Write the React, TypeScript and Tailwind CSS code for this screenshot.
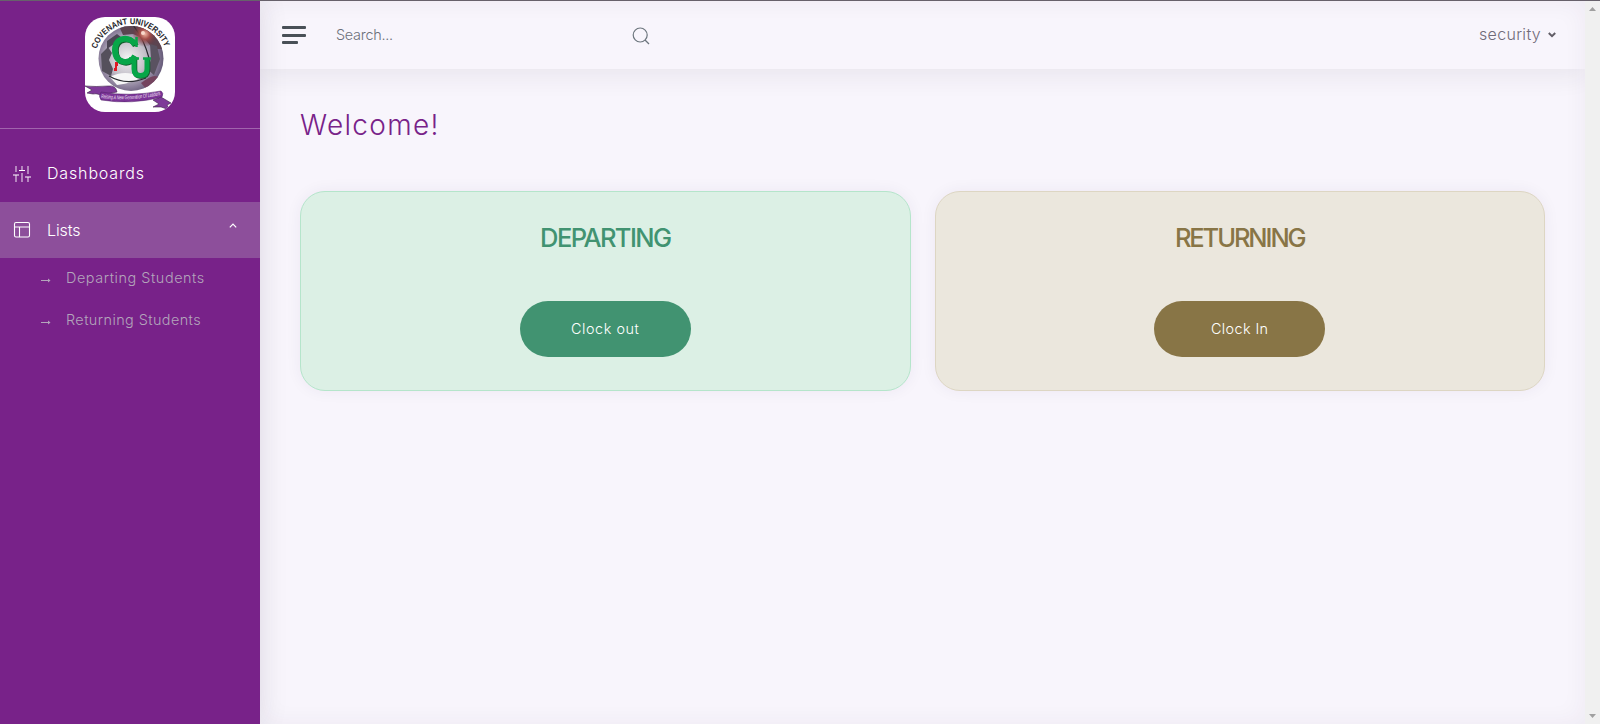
import React from "react";

function Logo() {
  return (
    <svg viewBox="0 0 90 95" className="h-[95px] w-[90px] rounded-[20px] bg-white">
      <defs>
        <radialGradient id="globe" cx="0.45" cy="0.5" r="0.55">
          <stop offset="0" stopColor="#f4f4f4" />
          <stop offset="0.5" stopColor="#c4c0c9" />
          <stop offset="0.8" stopColor="#8d819c" />
          <stop offset="1" stopColor="#655a78" />
        </radialGradient>
        <radialGradient id="flare" cx="0.5" cy="0.5" r="0.5">
          <stop offset="0" stopColor="#f0b3a0" />
          <stop offset="0.4" stopColor="#a34d48" />
          <stop offset="1" stopColor="#6b3440" stopOpacity="0" />
        </radialGradient>
        <clipPath id="disc"><circle cx="46" cy="41.500" r="32.500" /></clipPath>
        <path id="arc" d="M11.500 32 A36.300 36.300 0 0 1 82.300 44" />
        <path id="motto" d="M16 81 Q46 85 80 77" />
      </defs>
      <circle cx="46" cy="41.500" r="32.500" fill="url(#globe)" />
      <g clipPath="url(#disc)">
        <path d="M34 9 Q50 5 62 10 Q76 18 79 32 L68 32 L60 22 L48 17 L38 18Z" fill="#5c4450" />
        <path d="M65 27 L72 29 L75 42 L69 58 L63 53 L66 42Z" fill="#5a5261" />
        <path d="M16 37 L23 30 L27 36 L24 43 L28 52 L26 59 L17 54Z" fill="#55505c" />
        <path d="M22 24 L32 17 L36 20 L29 27 L22 32Z" fill="#4b4654" />
        <path d="M25 60 Q40 52 56 60 Q49 66 32 68Z" fill="#f7f7f7" />
        <path d="M24 59 Q41 69 61 61 M48 8 Q59 22 64 41" fill="none" stroke="#292b30" strokeWidth="1.2" />
        <path d="M56 66 Q70 55 74 61 L63 74Z" fill="#75445f" />
        <circle cx="60" cy="17" r="13" fill="url(#flare)" />
        <circle cx="58" cy="16" r="2" fill="#f8d9cb" />
      </g>
      <path d="M30 45 h3 v4 h-1 v5 h-3 v-3 h1z" fill="#e01822" />
      <text fill="#26252a" fontSize="8.500" fontWeight="700" fontFamily="Liberation Sans, sans-serif">
        <textPath href="#arc" textLength="89" lengthAdjust="spacingAndGlyphs">COVENANT UNIVERSITY</textPath>
      </text>
      <g fill="none" strokeLinecap="butt">
        <g stroke="#145d2d" strokeWidth="6" transform="translate(.8 .8)">
          <path d="M50 28 C46 19 30 19 30 33 C30 47 45 48 50 39" />
          <path d="M49 41 V52 Q49 58.500 55.500 58.500 Q62 58.500 62 52 V41" strokeWidth="5" />
        </g>
        <g stroke="#07a648" strokeWidth="6">
          <path d="M50 28 C46 19 30 19 30 33 C30 47 45 48 50 39" />
          <path d="M49 41 V52 Q49 58.500 55.500 58.500 Q62 58.500 62 52 V41" strokeWidth="5" />
        </g>
        <path d="M51.500 20 V30 M44 41.500 H54 M58 41.500 H66" stroke="#07a648" strokeWidth="2.500" />
      </g>
      <path d="M0 69 Q11 70 23 69 Q31 68 32 75 L16 78 Q10 76 8 77 L2 76 L7 73Z" fill="#7e3a98" stroke="#3d2448" strokeWidth=".6" />
      <path d="M76 80 L86 86 L82 88 L85 93 L76 90 L68 90 L74 87 L68 83Z" fill="#7e3a98" stroke="#3d2448" strokeWidth=".6" />
      <path d="M16 75 Q44 80 76 74 Q79 76 77 80 Q47 88 16 83 Q13 79 16 75Z" fill="#7b3497" stroke="#512366" strokeWidth=".5" />
      <text fill="#f2e7f5" fontSize="5.600" fontStyle="italic" fontFamily="Liberation Sans, sans-serif">
        <textPath href="#motto" textLength="60" lengthAdjust="spacingAndGlyphs">Raising A New Generation Of Leaders</textPath>
      </text>
    </svg>
  );
}

function Sliders() {
  return (
    <svg viewBox="0 0 18 18" className="h-[18px] w-[18px] shrink-0" fill="none" stroke="#fff" strokeWidth="1.2">
      <path opacity=".75" d="M3 1v6M3 10v7M9 1v4M9 8v9M15 1v8M15 12v5" />
      <path d="M0 10h6M6 5.500h6M12 12h6" />
    </svg>
  );
}

function Layout() {
  return (
    <svg viewBox="0 0 18 18" className="h-[18px] w-[18px] shrink-0" fill="none" stroke="#fff" strokeWidth="1.1">
      <rect x="1.500" y="1.500" width="15" height="14.500" rx="1.500" />
      <path d="M1.500 6h15M6.500 6V16" />
    </svg>
  );
}

function SubItem({ label, className }: { label: string; className: string }) {
  return (
    <a className="flex h-[42px] items-center pl-[41px] text-[#b3a5bb]">
      <svg viewBox="0 0 10 6" className="mt-[2px] h-[6px] w-[10px]" fill="none" stroke="currentColor">
        <path d="M0 3.500h8" />
        <path d="M7 1.500v4l2.500-2z" fill="currentColor" stroke="none" />
      </svg>
      <span className={`mb-[2px] ml-[15px] whitespace-nowrap text-[14.4px] font-light ${className}`}>{label}</span>
    </a>
  );
}

function Sidebar() {
  return (
    <aside className="z-10 flex w-[260px] shrink-0 flex-col bg-[#782289] shadow-[0_0_30px_rgba(40,40,50,0.09)]">
      <div className="flex h-[128px] justify-center border-b border-[#a164ad] pt-4"><Logo /></div>
      <nav className="pt-[17px] text-white">
        <a className="flex h-[56px] items-center pl-[13px]">
          <Sliders />
          <span className="mb-[2px] ml-4 text-[16px] font-light tracking-[0.85px]">Dashboards</span>
        </a>
        <a className="flex h-[56px] items-center bg-[#8d4f9b] pr-[23px] pl-[13px]">
          <Layout />
          <span className="ml-4 grow text-[16px] font-light tracking-[-0.1px]">Lists</span>
          <svg viewBox="0 0 8 5" className="mb-[10px] h-[5px] w-[8px]" fill="none" stroke="#fff" strokeWidth="1.200"><path d="M.8 4.300 4 1l3.200 3.300" /></svg>
        </a>
        <SubItem label="Departing Students" className="tracking-[0.57px]" />
        <SubItem label="Returning Students" className="tracking-[0.43px]" />
      </nav>
    </aside>
  );
}

function Header() {
  return (
    <header className="flex h-[68px] shrink-0 items-center shadow-[0_8px_24px_rgba(40,40,50,0.07)]">
      <svg viewBox="0 0 24 18" className="ml-[22px] h-[18px] w-[24px]" fill="#495057">
        <rect width="24" height="3" rx="1" />
        <rect y="8" width="24" height="3" rx="1" />
        <rect y="15" width="16" height="3" rx="1" />
      </svg>
      <span className="ml-[30px] w-[296px] text-[14.4px] font-light tracking-[-0.25px] text-[#6c707a]">Search...</span>
      <svg viewBox="0 0 18 18" className="mt-[2px] h-[18px] w-[18px]" fill="none" stroke="#6c757d" strokeWidth="1.200">
        <circle cx="8.200" cy="8" r="7" />
        <path d="m13 13 4 4" />
      </svg>
      <div className="mr-[29px] ml-auto flex items-center text-[#706b79]">
        <span className="mb-[2px] text-[16px] font-light tracking-[0.3px]">security</span>
        <svg viewBox="0 0 8 6" className="mb-px ml-[7px] h-[6px] w-[8px]" fill="none" stroke="#615d66" strokeWidth="2"><path d="M.8 1 4 4.200 7.200 1" /></svg>
      </div>
    </header>
  );
}

type CardProps = { title: string; action: string; card: string; heading: string; button: string; text: string };

function ClockCard({ title, action, card, heading, button, text }: CardProps) {
  return (
    <section className={`flex h-[200px] flex-1 flex-col items-center rounded-[25px] border shadow-[0_0_16px_rgba(50,30,80,0.06)] ${card}`}>
      <h2 className={`mt-[30px] text-[25.5px] leading-[32px] font-[450] ${heading}`}>{title}</h2>
      <button className={`mt-[47px] h-[56px] w-[171px] rounded-full text-[14.4px] font-light text-white ${button}`}>
        <span className={text}>{action}</span>
      </button>
    </section>
  );
}

export default function App() {
  return (
    <div className="flex h-[724px] w-full flex-col overflow-hidden border-t border-[#67616b] bg-[#f8f5fc] font-['Inter',sans-serif]">
      <div className="flex min-h-0 grow">
        <Sidebar />
        <main className="flex grow flex-col shadow-[inset_0_0_24px_rgba(50,30,70,0.055)]">
          <Header />
          <div className="pt-[35px] pr-[40px] pl-[40px]">
            <h1 className="text-[28px] leading-[42px] font-light tracking-[1.3px] text-[#782289]">Welcome!</h1>
            <div className="mt-[45px] flex gap-6">
              <ClockCard title="DEPARTING" action="Clock out" card="border-[#b5e5cb] bg-[#dcf0e5]" heading="text-[#419371] tracking-[-1.6px]" button="bg-[#419371]" text="tracking-[0.55px]" />
              <ClockCard title="RETURNING" action="Clock In" card="border-[#ddd6c3] bg-[#ebe7dd]" heading="text-[#887546] tracking-[-2.1px]" button="bg-[#887546]" text="tracking-[0.4px]" />
            </div>
          </div>
        </main>
        <div className="flex w-[15px] shrink-0 flex-col items-center justify-between bg-[#f0f0f0] pt-[6px] pb-[6px]">
          <svg viewBox="0 0 7 4" className="h-[4px] w-[7px]" fill="#a0a0a0"><path d="M0 4h7L3.500 0z" /></svg>
          <svg viewBox="0 0 7 4" className="h-[4px] w-[7px]" fill="#a0a0a0"><path d="M0 0h7L3.500 4z" /></svg>
        </div>
      </div>
    </div>
  );
}
